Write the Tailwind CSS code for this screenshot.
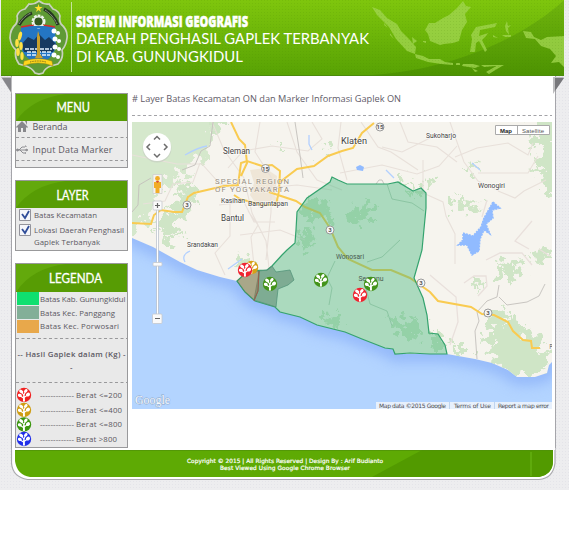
<!DOCTYPE html>
<html lang="id">
<head>
<meta charset="utf-8">
<title>Sistem Informasi Geografis Gunungkidul</title>
<script src="https://cdn.jsdelivr.net/npm/@tailwindcss/browser@4"></script>
</head>
<body class="bg-white w-[576px] h-[541px] overflow-hidden font-['Open_Sans','Noto_Sans',sans-serif] text-[#5b5560]">
<svg class="absolute w-0 h-0" aria-hidden="true">
  <symbol id="tree" viewBox="0 0 16 16">
    <circle cx="8" cy="8" r="7.2" fill="currentColor"/>
    <g fill="#fff"><ellipse cx="5.2" cy="4.5" rx="2.3" ry="1.5" transform="rotate(35 5.2 4.5)"/><ellipse cx="9.8" cy="3.9" rx="2.1" ry="1.5" transform="rotate(-50 9.8 3.9)"/><ellipse cx="3.8" cy="8.3" rx="2" ry="1.6" transform="rotate(10 3.8 8.3)"/><ellipse cx="12" cy="7.6" rx="2.1" ry="1.8" transform="rotate(-30 12 7.6)"/></g>
    <path d="M8 14.2 7.8 8 5.500 5M8 10.6 11.500 8M8 8 9.500 4.4M7.8 11.200 4 8.8" stroke="#fff" stroke-width="1.1" fill="none"/>
    <path d="M7.300 8.500h1.300l.3 6h-2z" fill="#fff"/>
  </symbol>
</svg>
<div class="w-[569px] h-[490px] bg-[#ededef] bg-[radial-gradient(#e4e4e9_0.6px,transparent_0.8px)] bg-[size:3px_3px] flex flex-col">
  <header class="w-[563px] h-[76px] ml-px shrink-0 border-b border-[#4b8b0b]">
    <svg class="block w-[563px] h-[75px]" viewBox="1 0 563 75">
      <defs>
        <linearGradient id="hg" x2="0" y2="1"><stop stop-color="#7fc60d"/><stop offset="1" stop-color="#58a204"/></linearGradient>
        <linearGradient id="hd" x2="0" y2="1"><stop stop-color="#70b50d"/><stop offset="1" stop-color="#4d9302"/></linearGradient>
        <pattern id="dots" width="3" height="3" patternUnits="userSpaceOnUse"><path d="M0 0h1v1H0z" fill="#3c7e00" opacity=".13"/></pattern>
      </defs>
      <path fill="url(#hg)" d="M1 0h563v75H1z"/>
      <path fill="url(#hd)" d="M564 0V75H372C450 70 524 38 564 0z"/>
      <g fill="#a1d64f" opacity=".78">
        <path d="M372 7l8 3 7 8 10 6 4 7 8 8 7 8-1 7-8-3-11-12-7-12-12-12zM384 23l4 5-4-3zM390 33l4 6-4-4zM412 37l5 4-4 3zM423 41l3 0 0 2-3-1z"/>
        <path d="M429 23l6 0 8-5 6-3 8-7 6-7 3 5 5 1-6 7 2 8-5 8-3 11-6 2-9 1-4 1-10-4-2-7-3-4z"/>
        <path d="M415 54l8 2 6 3 11 0 5 3 8 1 0 2-12-1-13-2-12-4zM456 63h4v2h-4zm7 1l10 0 7 2-5 2-13-2zm18 1h18l-3 1-12 1zM486 72l12-7 6 0-7 4-8 5zM472 68l6 3-3 1z"/>
        <path d="M476 27l21-4-2 4-15 3-1 6 9-3-2 3-4 4 5 10-2 2-6-11-3 2-1 9-5 0 2-13-1-4z"/>
        <path d="M507 21l1 5 3-1-3 3 1 7-3-4-1-5zM502 35h9v2h-6zM493 35l5 3-5-1zM523 31l8 1 3 5 7 3 6-3 17-1v31l-5-5-8 1 5-7-6-7-9-3-6-7-9-1z"/>
      </g>
      <path fill="url(#dots)" d="M1 0h563v75H1z"/>
      <g>
        <path d="M39 1q5 4 10 3l4 5q6 2 7 7-1 5 1 8 7 6 6 14-1 8-5 12 2 8-4 14l-7 2q-6 2-8 7l-4 1-4-1q-3-5-9-7l-7-2q-5-7-3-14-5-4-6-12 0-9 6-14 2-4 1-8 2-6 8-7l4-5q5 1 10-3z" fill="#5f9a35" stroke="#c9d1be" stroke-width="1.7"/>
        <path d="M21 27q16-3 34 0l1 20q-3 9-9 13H30q-7-5-10-15z" fill="#2476c4"/>
        <path d="M21 45l7-8 6 3 5-6 6 6 4-3 8 8-4 7H24z" fill="#173a61"/>
        <path d="M21 27q17-4 34 0" stroke="#d52b2b" stroke-width="1.3" fill="none"/>
        <path d="M25 49h27M27 52h24M27 55h23" stroke="#e6f3ff" stroke-width="1.4" stroke-dasharray="4 1"/>
        <circle cx="38.500" cy="21.500" r="5.500" fill="none" stroke="#eef3ed" stroke-width="3" stroke-dasharray="2.500 1"/>
        <circle cx="38.500" cy="21.500" r="4.800" fill="#34591f" stroke="#eef3ed" stroke-width="1.500"/>
        <path d="M33 26h12v2H33z" fill="#2476c4"/>
        <path d="M38.500 4l1 3h3l-2.500 2 1 3-2.500-2-2.500 2 1-3-2.500-2h3z" fill="#ffe02d"/>
        <path d="M19 25q5-9 13-12M58 25q-4-11-14-16" stroke="#263621" stroke-width="3.200" fill="none"/>
        <path d="M19 24q5-8 12-11M57 24q-4-9-12-14" stroke="#d9dfcd" stroke-width=".8" stroke-dasharray="1 .6" fill="none"/>
        <path d="M38 31l2 6v17l3 4h-8l2-4V37z" fill="#c8a02c"/>
        <g fill="#ffe246"><ellipse cx="20" cy="36" rx="1.800" ry="4.500" transform="rotate(15 20 36)"/><ellipse cx="17" cy="43" rx="1.800" ry="4"/><ellipse cx="21" cy="46" rx="1.800" ry="4"/><ellipse cx="18" cy="52" rx="1.800" ry="4"/><ellipse cx="22" cy="56" rx="1.700" ry="4"/></g>
        <g fill="#fff"><circle cx="54" cy="31" r="2.500"/><circle cx="58" cy="33" r="2"/><circle cx="55" cy="39" r="2.500"/><circle cx="59" cy="41" r="2"/><circle cx="55" cy="47" r="2.500"/><circle cx="59" cy="49" r="2"/><circle cx="54" cy="55" r="2.500"/><circle cx="58" cy="57" r="2"/></g>
        <path d="M24 61q14-5 28 0l1 5q-15-6-30 0z" fill="#ffd51c" stroke="#8e7f17" stroke-width=".5"/>
        <path d="M30 62q8-2 16 0" stroke="#756719" stroke-dasharray="1 .7" fill="none"/>
      </g>
      <path d="M71.500 2v70" stroke="#c5e59b"/>
      <g fill="#fff">
        <text x="76" y="27" font-family="Open Sans,sans-serif" font-weight="800" font-size="15.500" stroke="#fff" stroke-width=".5" textLength="172" lengthAdjust="spacingAndGlyphs">SISTEM INFORMASI GEOGRAFIS</text>
        <text x="76" y="44" font-family="Lato,sans-serif" font-size="15" textLength="293" lengthAdjust="spacingAndGlyphs">DAERAH PENGHASIL GAPLEK TERBANYAK</text>
        <text x="76" y="61.500" font-family="Lato,sans-serif" font-size="15" textLength="167" lengthAdjust="spacingAndGlyphs">DI KAB. GUNUNGKIDUL</text>
      </g>
    </svg>
  </header>

  <div class="relative flex h-[372px] w-[545px] ml-[11px] shrink-0 border-x border-[#a5a5aa] bg-white">
    <svg class="absolute -left-[11px] top-px w-[12px] h-[18px]" viewBox="0 0 12 18"><path d="M0 0h11v17z" fill="#bdbdbf"/><path d="M1 1h9v14z" fill="#85858a"/></svg>
    <svg class="absolute -right-[10px] top-px w-[12px] h-[18px]" viewBox="0 0 12 18"><path d="M11 0H0v17z" fill="#bdbdbf"/><path d="M11 1H2v13z" fill="#77777b"/></svg>

    <aside class="ml-[3px] w-[113px] mt-[17px] shrink-0 flex flex-col">
      <section class="h-[75px] border border-[#99999b] bg-[#ebebeb]">
        <h2 class="h-[27px] bg-[#579c04]"><svg class="block w-full h-full" viewBox="0 0 111 27"><path d="M0 27Q16 4 50 0H0z" fill="#63a90c"/><text x="40.500" y="18" font-family="Lato" font-size="12.500" fill="#fff" stroke="#fff" stroke-width=".3" textLength="33.500" lengthAdjust="spacingAndGlyphs">MENU</text></svg></h2>
        <svg class="block w-[111px] h-[46px]" viewBox="16 121 111 46">
          <path d="M16 127l6-6 6 6-1 1-1-1v5h-3v-4h-2v4h-3v-5l-1 1zM25 121h2v4z" fill="#88888c"/>
          <text x="32.500" y="129.500" font-family="Open Sans" font-size="9" fill="#5b5862" textLength="35">Beranda</text>
          <path d="M16 137.500h111M16 160.500h111" stroke="#99999b" stroke-dasharray="3 2.500"/>
          <g stroke="#8c8c90" fill="none"><path d="M17 150h10M19 150l3-3h3M20 150l3 3h3"/><circle cx="17.500" cy="150" r="1" fill="#8c8c90"/><path d="M25 146h1v1M25 153h1M26 149l2 1-2 1z"/></g>
          <text x="32.500" y="153" font-family="Open Sans" font-size="9" fill="#5b5862" textLength="80">Input Data Marker</text>
        </svg>
      </section>
      <section class="h-[71px] mt-3 border border-[#99999b] bg-[#ebebeb]">
        <h2 class="h-[27px] bg-[#579c04]"><svg class="block w-full h-full" viewBox="0 0 111 27"><path d="M0 27Q16 4 50 0H0z" fill="#63a90c"/><text x="40.500" y="18.500" font-family="Lato" font-size="12.500" fill="#fff" stroke="#fff" stroke-width=".3" textLength="32" lengthAdjust="spacingAndGlyphs">LAYER</text></svg></h2>
        <svg class="block w-[111px] h-[42px]" viewBox="16 209 111 42">
          <g fill="#f5f6fa" stroke="#93939b"><path d="M19.500 210.500h11v11h-11zM19.500 225.500h11v11h-11z"/></g>
          <path d="M22 215l3 4 4-7M22 230l3 4 4-7" fill="none" stroke="#304d99" stroke-width="1.800"/>
          <g font-family="Open Sans" font-size="7.800" fill="#5b5862"><text x="34" y="218.500" textLength="63">Batas Kecamatan</text><text x="34" y="233.500" textLength="90">Lokasi Daerah Penghasil</text><text x="34" y="246" textLength="66">Gaplek Terbanyak</text></g>
        </svg>
      </section>
      <section class="h-[185px] mt-3 border border-[#99999b] bg-[#e9e9e9]">
        <h2 class="h-[28px] bg-[#579c04]"><svg class="block w-full h-full" viewBox="0 0 111 28"><path d="M0 28Q16 4 50 0H0z" fill="#63a90c"/><text x="33" y="19" font-family="Lato" font-size="12.500" fill="#fff" stroke="#fff" stroke-width=".3" textLength="53" lengthAdjust="spacingAndGlyphs">LEGENDA</text></svg></h2>
        <svg class="block w-[111px] h-[155px]" viewBox="16 292 111 155">
          <path d="M17 292h22v13H17z" fill="#10df70"/><path d="M17 306h22v13H17z" fill="#83af98"/><path d="M17 320h22v13H17z" fill="#e8a84b"/>
          <path d="M16 338.500h111M16 382.500h111" stroke="#99999b" stroke-dasharray="3 2.500"/>
          <g font-family="Open Sans" font-size="7.800" fill="#5b5862">
            <text x="40" y="301.500" textLength="85.500">Batas Kab. Gunungkidul</text><text x="40" y="315.500" textLength="75">Batas Kec. Panggang</text><text x="40" y="329" textLength="79">Batas Kec. Porwosari</text>
            <g font-weight="600"><text x="17.500" y="356.500" textLength="108">-- Hasil Gaplek dalam (Kg) -</text><text x="70" y="370">-</text></g>
            <text x="40" y="397.500" textLength="34">-------------</text><text x="76" y="397.500" textLength="46">Berat &lt;=200</text>
            <text x="40" y="412.500" textLength="34">-------------</text><text x="76" y="412.500" textLength="46">Berat &lt;=400</text>
            <text x="40" y="427" textLength="34">-------------</text><text x="76" y="427" textLength="46">Berat &lt;=800</text>
            <text x="40" y="442" textLength="34">-------------</text><text x="76" y="442" textLength="41">Berat &gt;800</text>
          </g>
          <use href="#tree" x="16" y="387" width="16" height="16" color="#f02222"/><use href="#tree" x="16" y="402" width="16" height="16" color="#cf9d12"/><use href="#tree" x="16" y="416.500" width="16" height="16" color="#3d9710"/><use href="#tree" x="16" y="431" width="16" height="16" color="#202fe9"/>
        </svg>
      </section>
    </aside>

    <main class="ml-1 flex flex-col w-[420px] shrink-0">
      <div class="h-[40px]">
        <svg class="block w-[420px] h-[40px]" viewBox="132 76 420 40"><text x="132" y="102" font-family="Open Sans" font-size="9.300" fill="#615b68" textLength="269" lengthAdjust="spacingAndGlyphs"># Layer Batas Kecamatan ON dan Marker Informasi Gaplek ON</text><path d="M132 115.500h420" stroke="#a3a3a7" stroke-dasharray="3 2.500"/></svg>
      </div>
      <svg class="block mt-[6px] w-[420px] h-[287px]" viewBox="132 122 420 287">
        <defs>
          <filter id="soft" x="-10%" y="-20%" width="120%" height="140%" color-interpolation-filters="sRGB"><feGaussianBlur stdDeviation="7"/></filter>
          <filter id="rough" x="-10%" y="-10%" width="120%" height="120%" color-interpolation-filters="sRGB"><feTurbulence type="fractalNoise" baseFrequency=".11" numOctaves="4" seed="4"/><feDisplacementMap in="SourceGraphic" scale="34" xChannelSelector="R" yChannelSelector="G"/></filter>
          <path id="land" d="M132 122H552V362l-3 3-2 8-12 4-18 0-9-7-16-7-17-4-28-5-52 0-2-5-8-1-23-9-17-7-28-7-17-8-20-5-5-5-20-6-10-9-8-11-17-4-23-7-17-8-27-15-21-9z"/>
          <clipPath id="landclip"><use href="#land"/></clipPath>
        </defs>
        <path fill="#b3d4ff" d="M132 122h420v287H132z"/>
        <use href="#land" fill="none" stroke="#8fb4f9" stroke-width="14" filter="url(#soft)"/>
        <use href="#land" fill="#f6f4ee"/>
        <g clip-path="url(#landclip)">
          <g fill="#cfe5c6" filter="url(#rough)">
            <path d="M122 112h86l5 25-7 22-17 4-8 17-16 5-12 15-8 24-23 14z" opacity=".85"/>
            <path d="M185 181l14 7-8 21-17 20-20 4 7-21 14-7zM205 115h26l-15 19zM162 235l15-3 4 8-14 5z"/>
            <path d="M540 115h20v79l-19-10 3-13-12-5 9-9-5-14zM452 196l20 5 10 8-21 2zM424 176l8 2 4 8-8-1zM468 162l14 5-6 6z"/>
            <path d="M497 265l20-4 6 9-14 12-10-7zM530 255l13-7 8 8-15 7zM474 279l8 3-5 8z"/>
            <path d="M490 311l17 3 12 12 10 5 14 16 8 18-15 14-28-4-18-15 2-15-11-5 8-17zM430 332l14 5 2 12-14 0zM450 345h18l3 9-16 0z"/>
            <path d="M307 197l16 2 8 16-16 7-14-6zM348 212l18-9 12 6-11 14-12-2zM406 180l12 10-5 8zM302 230l12 2-3 18-12-3zM330 312l9 3 2 14-14-4z"/>
            <path d="M395 174l8 0 5 9h-9zM320 145l8 2-3 8zM273 145h9l-3 5zM243 257l8 2-4 8-8-4zM386 317l34 4 6 12-20 8z"/>
          </g>
          <path d="M250 170l15-2 12 8-2 20 7 8-23 4-9-13 4-12z" fill="#efe6d7"/>
          <g fill="none" stroke="#e8e0da" stroke-width="1.100">
            <path d="M212 122l12 28 20 28 8 35 14 28 3 27M260 122l-5 30 16 25 0 35-5 48M132 155l45 9 25 0 18 20 35 5 42-4 35 5M240 235l40-5 25 10M219 205l25-3 10 20 21 0M287 122l10 30 20 28 25 10M312 122l10 17-14 12-36-5-29 5-15 17M200 163l-7 19-20 2-8 17-22 3M230 201v35l-15 17 10 22M248 211l10 14-7 12 3 29"/>
            <path d="M340 173l42-8 35 9 22-8 18-20M361 122l17 25 13 5 27 18M400 122l8 20 29 5 20 15M450 122l14 40 14 19 21 10M498 191l17 7 9-7 22-11M423 160l0 33 20 9 3 14 9 18 0 30M455 157l22-9 31-5 20 12 5-12M382 147l20 5 36-18M478 173h50l10-17M347 180l-9-32 3-26"/>
          </g>
          <g fill="none" stroke="#e9e0dc" stroke-width="1.300"><path d="M430 275l26 22 2 25-8 23M464 283l10-7 12 0 1 10-9 10M487 200l-5 17M486 260l14-7 22 0 10 12M532 221l-17 20 14 8M539 249l11 7"/></g>
          <g fill="none" stroke="#c3c0bb" stroke-width=".9"><path d="M213 122l-3 24-9 5-6 14-13 5M132 212l6-7 1-20 12-7M295 122l5 33 3 23M376 184l3-4h3l2 4M477 359l-2-28 4-10-2-9 10-11 10-4 2-12M499 297l8 8 20-3 12-6 6-12"/></g>
          <g fill="#91bbff"><path d="M356 167l4-2 4 2-1 4-6-1z"/><path d="M493 202l7 6-8 2 1 8-7 6 4 10-6-4-4 9-1 12-7 4-5-10-9 0 5-5 0-7 10 3 8-9 3-9z" stroke="#91bbff" stroke-width="1.500" stroke-dasharray="2 1"/></g>
          <path d="M185 155q14-8 22-9M185 262q-4-7 5-11M228 269l14-10M309 135v9l3 6M472 163l8 7M386 170l8 8" fill="none" stroke="#b2d0ff" stroke-width="1.300"/>
          <g fill="none" stroke="#f9cb51" stroke-width="2"><path d="M132 223l19 1 3-9 7-5 13 2 8 0 6-15 6-4 30-7 14-1 3-22 6-2 15 5 10-1 8 6-1 20-3 14-13 0-23-6-6-4M231 122l8 17 6 6 2 18-6 13M280 182l17-13 17-3 14-10 14-5 11-3 9-15 12-10M269 192l27 9 9 6 15 6 10 15 8 19 10 12 24 11 19 0 19 8 20 14 8 9 33 6 11 7 12 1 14 7 5 9 10 9 8 1 1 7h8"/></g>
        </g>
        <path d="M237 281L248 271L267 270L272 266L282 255L287 250L295 243L296 230L297 212L307 198L330 182L332 177L338 180L347 184L388 184L398 182L413 191L421 188L426 193L426 208L422 250L414 278L423 298L427 315L429 333L438 334L445 345L447 354L430 354L410 353L395 354L393 349L385 348L362 339L345 332L317 325L300 317L280 312L275 307L255 301L245 292z" fill="#43b57c" fill-opacity=".42" stroke="#34a36e" stroke-width="1.200"/>
        <path d="M259 271l8-1 5-4 4 6 14-2 4 10-6 5-10 4-2 18-22-7 4-22z" fill="#517d68" fill-opacity=".5" stroke="#56957b" stroke-width=".8"/>
        <path d="M237 281l11-10h11l-1 20-4 9-9-8z" fill="#a7694a" fill-opacity=".45" stroke="#3e9568" stroke-width=".8"/><path d="M259 271l-1 20-4 10" fill="none" stroke="#a1594a"/>
        <g fill="none" stroke="#6caf88" opacity=".5"><path d="M335 261l-8 17 5 10-3 17M365 284l5 20 17 7 5 15M387 184l5 15 20 4 12 8M400 240l-18 17-15 5"/></g>
        <g fill="#f6f6f6" stroke="#858585" stroke-width=".8"><circle cx="380" cy="127" r="4"/><circle cx="265.500" cy="168.500" r="4"/><circle cx="187" cy="205" r="4"/><circle cx="330" cy="230" r="4"/><circle cx="421" cy="283" r="4"/><circle cx="488" cy="313" r="4"/></g>
        <g font-family="Roboto,sans-serif" font-size="6" font-weight="700" text-anchor="middle" fill="#555"><text x="380" y="129">15</text><text x="265.500" y="170.500">15</text><text x="187" y="207">3</text><text x="330" y="232">3</text><text x="421" y="285">3</text><text x="488" y="315">3</text></g>
        <g font-family="Roboto,sans-serif" fill="#444" stroke="#fff" stroke-width="1.500" stroke-opacity=".6" paint-order="stroke">
          <g font-size="8.700"><text x="223" y="153.500" textLength="27" lengthAdjust="spacingAndGlyphs">Sleman</text><text x="341" y="143.500" textLength="26" lengthAdjust="spacingAndGlyphs">Klaten</text><text x="221" y="221" textLength="23" lengthAdjust="spacingAndGlyphs">Bantul</text></g>
          <g font-size="7"><text x="426" y="138" textLength="30" lengthAdjust="spacingAndGlyphs">Sukoharjo</text><text x="478" y="187.500" textLength="27" lengthAdjust="spacingAndGlyphs">Wonogiri</text><text x="221" y="203" textLength="24" lengthAdjust="spacingAndGlyphs">Kasihan</text><text x="248" y="205.500" textLength="40" lengthAdjust="spacingAndGlyphs">Banguntapan</text><text x="187" y="247" textLength="31" lengthAdjust="spacingAndGlyphs">Srandakan</text></g>
          <text x="549.500" y="349" font-size="7" textLength="3" lengthAdjust="spacingAndGlyphs">P</text>
        </g>
        <g font-family="Roboto,sans-serif" fill="#485b50" font-size="7"><text x="336" y="259" textLength="28" lengthAdjust="spacingAndGlyphs">Wonosari</text><text x="358.500" y="281" textLength="25" lengthAdjust="spacingAndGlyphs">Semanu</text></g>
        <g font-family="Roboto,sans-serif" font-size="7.800" fill="#958c7e" stroke="#fff" stroke-width="1" stroke-opacity=".5" paint-order="stroke"><text x="215" y="184" textLength="74">SPECIAL REGION</text><text x="215" y="192" textLength="74">OF YOGYAKARTA</text></g>
        <use href="#tree" x="244" y="260" width="15" height="15" color="#d6a018"/><use href="#tree" x="237" y="262" width="16" height="16" color="#ef2430"/><use href="#tree" x="262" y="276" width="16" height="16" color="#43931a"/><use href="#tree" x="313" y="272" width="16" height="16" color="#43931a"/><use href="#tree" x="363" y="276" width="16" height="16" color="#43931a"/><use href="#tree" x="352" y="287" width="16" height="16" color="#ef2430"/>
        <circle cx="157" cy="148" r="14.500" fill="#bbb" opacity=".4"/><circle cx="157" cy="147" r="14" fill="#fff"/><path d="M154 139.500l3-3 3 3M154 154l3 3 3-3M150 144l-3 3 3 3M164 144l3 3-3 3" fill="none" stroke="#6d6d6d" stroke-width="1.500"/>
        <path d="M153 174.500h9v19h-9z" fill="#f5f3ef" stroke="#ccc" stroke-width=".7"/><circle cx="157.500" cy="178.500" r="2.400" fill="#f1ad27"/><path d="M154 182h7v6h-1.500v5h-4v-5H154z" fill="#f1ad27"/><path d="M155.500 181l2 2 2-2z" fill="#d84d35"/>
        <path d="M157.500 210v104" stroke="#b4bdc9" stroke-width="2.500"/><path d="M157.500 210v104" stroke="#fff" stroke-width="1.200"/>
        <g fill="#fafafa" stroke="#c5c8cb" stroke-width=".8"><rect x="153" y="201" width="9" height="9" rx="1"/><rect x="152.500" y="314" width="9.500" height="9.500" rx="1"/><rect x="153" y="262.500" width="9" height="3.500" rx="1"/></g><path d="M155 205.500h5M157.500 203v5M155 318.500h5" stroke="#666" stroke-width="1.200"/>
        <path d="M495.500 125.500h54v9h-54z" fill="#fff" stroke="#aaa"/><path d="M517.500 125v10" stroke="#aaa"/>
        <g font-family="Liberation Sans,sans-serif" font-size="6"><text x="500" y="132.500" fill="#222" font-weight="700" textLength="12">Map</text><text x="522" y="132.500" fill="#555" textLength="22">Satellite</text></g>
        <path d="M376 402h176v7H376z" fill="#f0f5fb" opacity=".85"/><path d="M449.500 402v7M494.500 402v7" stroke="#bed4ef"/>
        <g font-family="DejaVu Sans,sans-serif" font-size="6" fill="#4d4d52"><text x="379" y="408" textLength="67">Map data ©2015 Google</text><text x="454" y="408" textLength="37">Terms of Use</text><text x="498" y="408" textLength="51">Report a map error</text></g>
        <text x="135" y="404" font-family="Liberation Serif,serif" font-size="12" fill="#f4f9ff" stroke="#8fa8c8" stroke-width=".9" paint-order="stroke" textLength="35" lengthAdjust="spacingAndGlyphs">Google</text>
      </svg>
    </main>
  </div>

  <footer class="w-[545px] h-[33px] ml-[11px] shrink-0">
    <svg class="block w-full h-full" viewBox="11 448 545 33">
      <path d="M11.500 448v15q1 14 16 16.500H539q14-1 16-16.500v-15z" fill="#fff" stroke="#aaaaae" stroke-width="1.200"/><path d="M12 447h543v3H12z" fill="#fff"/>
      <path d="M15 450h538v11q0 13-14 16H30q-13-2-15-16z" fill="#5eaa04"/>
      <path d="M422 450h131v11q0 13-14 16H372q24-13 50-27z" fill="#529a00"/><path d="M531 452v24" stroke="#65af10" stroke-width="1.500"/><path d="M15 450.500h538" stroke="#4f9008" stroke-width=".7"/>
      <g font-family="DejaVu Sans,sans-serif" font-size="5.800" fill="#fff" stroke="#fff" stroke-width=".2"><text x="187" y="462.500" textLength="196">Copyright © 2015 | All Rights Reserved | Design By : Arif Budianto</text><text x="220" y="470" textLength="130">Best Viewed Using Google Chrome Browser</text></g>
    </svg>
  </footer>
</div>
</body>
</html>
